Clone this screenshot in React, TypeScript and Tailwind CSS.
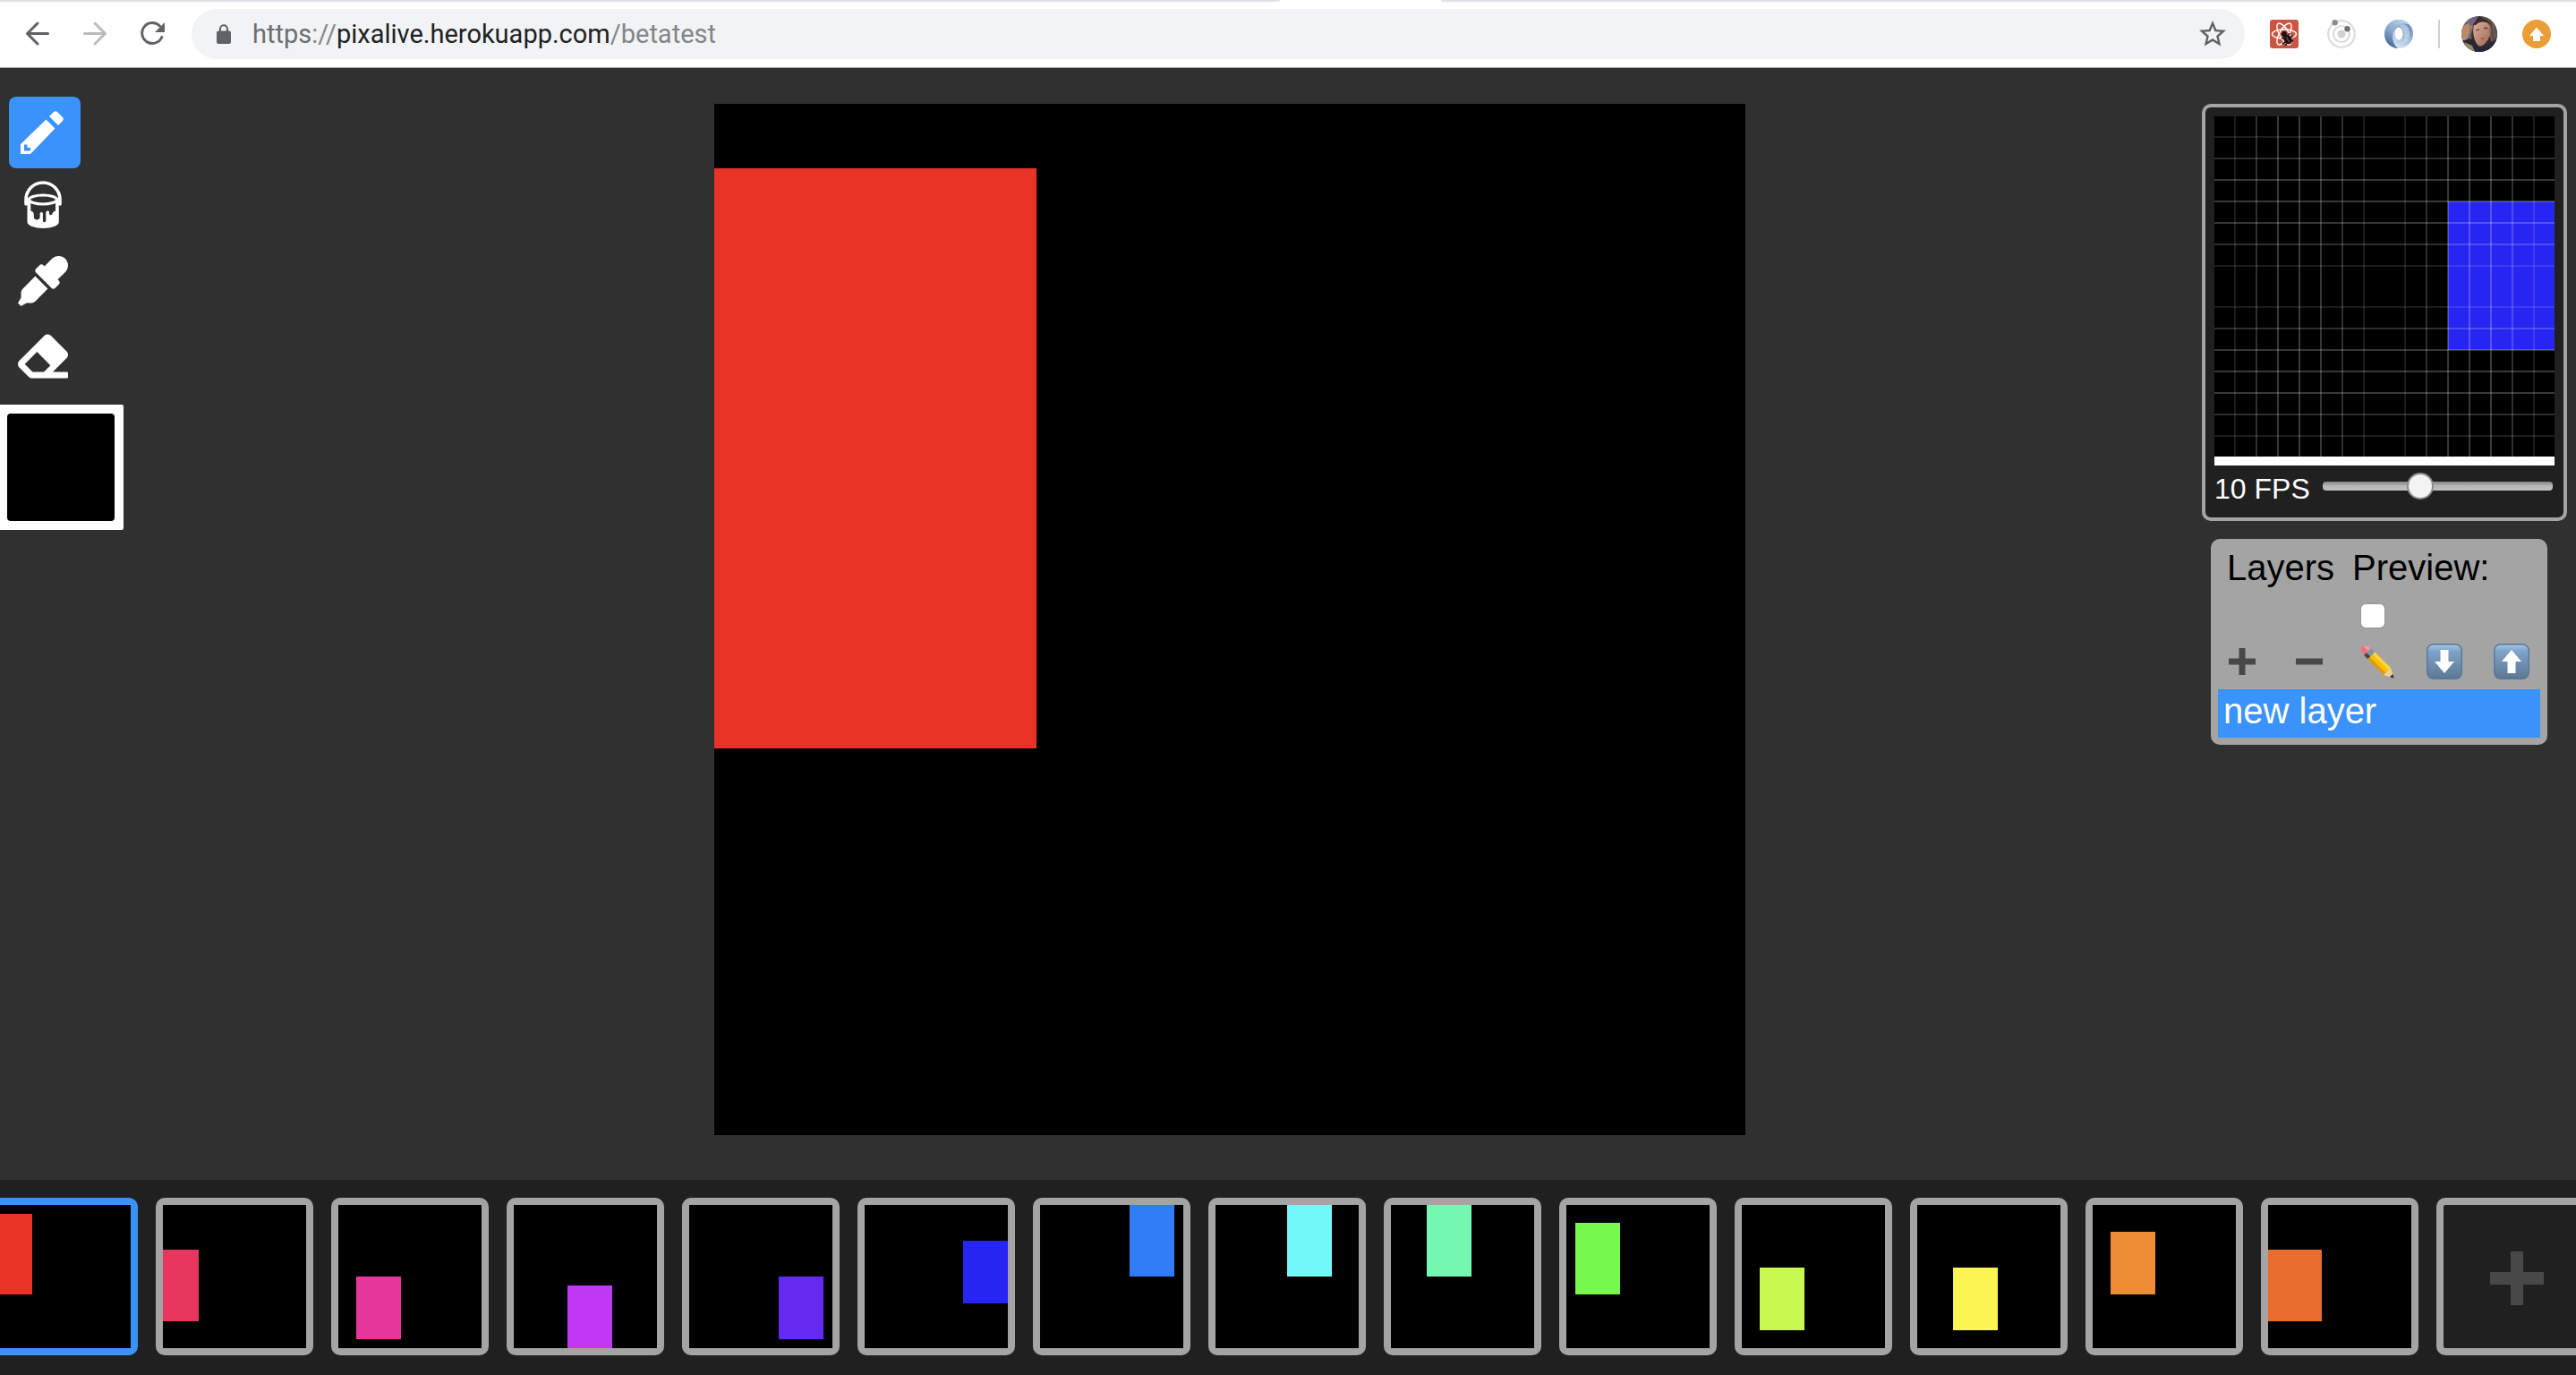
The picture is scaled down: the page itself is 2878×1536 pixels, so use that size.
import type { ReactNode } from "react";
import { useState } from "react";
import { FaEraser, FaEyeDropper } from "react-icons/fa";
import { MdStarBorder } from "react-icons/md";

type Block = { x: number; y: number; w: number; h: number; fill: string };

const FRAMES: Block[] = [
  { x: 0, y: 1, w: 5, h: 9, fill: "#e93326" },
  { x: 0, y: 5, w: 4, h: 8, fill: "#e8365e" },
  { x: 2, y: 8, w: 5, h: 7, fill: "#e8379b" },
  { x: 6, y: 9, w: 5, h: 7, fill: "#bf38f2" },
  { x: 10, y: 8, w: 5, h: 7, fill: "#652af1" },
  { x: 11, y: 4, w: 5, h: 7, fill: "#2625f1" },
  { x: 10, y: 0, w: 5, h: 8, fill: "#2f7cf4" },
  { x: 8, y: 0, w: 5, h: 8, fill: "#72f7fb" },
  { x: 4, y: 0, w: 5, h: 8, fill: "#74f7b1" },
  { x: 1, y: 2, w: 5, h: 8, fill: "#76f84e" },
  { x: 2, y: 7, w: 5, h: 7, fill: "#c9f950" },
  { x: 4, y: 7, w: 5, h: 7, fill: "#fbf553" },
  { x: 2, y: 3, w: 5, h: 7, fill: "#ed8e37" },
  { x: 0, y: 5, w: 6, h: 8, fill: "#e96d2d" },
];

const GRID_LINES = [
  [23, 0.11], [47, 0.18], [71, 0.22], [95, 0.22], [119, 0.21], [143, 0.18], [167, 0.11],
  [213, 0.11], [237, 0.18], [261, 0.21], [285, 0.22], [309, 0.22], [333, 0.18], [357, 0.11],
];

function PixelArt({ block, label }: { block: Block; label: string }) {
  return (
    <svg viewBox="0 0 16 16" className="block h-full w-full bg-black" role="img" aria-label={label}>
      <rect x={block.x} y={block.y} width={block.w} height={block.h} fill={block.fill} />
    </svg>
  );
}

function NavButton({ label, className, children }: { label: string; className: string; children: ReactNode }) {
  return (
    <button type="button" aria-label={label} className={`flex size-10 shrink-0 items-center justify-center ${className}`}>
      <svg viewBox="0 0 40 40" className="size-10" fill="none" stroke="currentColor" strokeWidth="3" strokeLinecap="round" strokeLinejoin="round">
        {children}
      </svg>
    </button>
  );
}

function ReactBugIcon() {
  return (
    <svg viewBox="0 0 32 32" className="size-8">
      <rect width="32" height="32" rx="3" fill="#cb5443" />
      <g fill="none" stroke="#fff" strokeWidth="1.4">
        <ellipse cx="16" cy="16" rx="13.5" ry="5.2" />
        <ellipse cx="16" cy="16" rx="13.5" ry="5.2" transform="rotate(60 16 16)" />
        <ellipse cx="16" cy="16" rx="13.5" ry="5.2" transform="rotate(120 16 16)" />
      </g>
      <g fill="#1b1311" stroke="#1b1311">
        <circle cx="16" cy="16" r="2.6" />
        <ellipse cx="20" cy="22" rx="3.8" ry="5.2" transform="rotate(-35 20 22)" />
        <path d="M13 21l5-1M14 27l5-3M26 18l-4 2M26 24l-4-2M17 29l3-4M22 15l-2 4" strokeWidth="1.5" fill="none" />
      </g>
      <path d="M18.5 19.5l3.5 6" stroke="#cb5443" strokeWidth="1" />
    </svg>
  );
}

function OrbitIcon() {
  return (
    <svg viewBox="0 0 32 32" className="size-8" fill="none">
      <circle cx="16" cy="16" r="14.8" stroke="#dcdcdc" strokeWidth="2.2" />
      <circle cx="16" cy="16" r="9" stroke="#dcdcdc" strokeWidth="2.2" />
      <circle cx="16" cy="16" r="4.6" fill="#d2d2d2" />
      <circle cx="8.6" cy="3.2" r="3.2" fill="#8b8b8b" />
      <circle cx="22.5" cy="10.2" r="3.2" fill="#717171" />
    </svg>
  );
}

function SwirlIcon() {
  return (
    <svg viewBox="0 0 32 32" className="size-8">
      <defs>
        <linearGradient id="swirlA" x1="0" y1="1" x2="0.6" y2="0">
          <stop offset="0" stopColor="#2e5288" />
          <stop offset="0.5" stopColor="#7f9fc6" />
          <stop offset="1" stopColor="#b9cfe5" />
        </linearGradient>
        <linearGradient id="swirlB" x1="0.8" y1="0" x2="0.2" y2="1">
          <stop offset="0" stopColor="#5878a8" />
          <stop offset="0.5" stopColor="#a3bddb" />
          <stop offset="1" stopColor="#e6f1fa" />
        </linearGradient>
      </defs>
      <circle cx="16" cy="16" r="16" fill="url(#swirlB)" />
      <path d="M13 32C5 30 0 24 0 16 0 7 7 0 16 0c6 0 10 2 13 7-4-3-8-3-12-1-5 2-8 6-8 12 0 6 2 11 6 14z" fill="url(#swirlA)" />
      <path d="M20 5c5 0 8 4 8 10 0 7-4 12-10 13 4-3 5-8 4-13-1-4-3-7-6-8z" fill="#c5d7ea" opacity="0.7" />
      <ellipse cx="16" cy="15.500" rx="4.5" ry="7" fill="#fff" />
    </svg>
  );
}

function Avatar() {
  return (
    <svg viewBox="0 0 40 40" className="size-10">
      <defs>
        <clipPath id="avatarClip">
          <circle cx="20" cy="20" r="20" />
        </clipPath>
        <linearGradient id="avatarSkin" x1="0" y1="0" x2="1" y2="1">
          <stop offset="0" stopColor="#dfb49f" />
          <stop offset="1" stopColor="#9c6552" />
        </linearGradient>
      </defs>
      <g clipPath="url(#avatarClip)">
        <rect width="40" height="40" fill="#3a2b2c" />
        <path d="M0 0h19l-5 9-4 16-10 3z" fill="#6f6780" />
        <path d="M0 12l8-4 4 4-6 14-6 2z" fill="#bd8a68" />
        <path d="M22 0h18v30l-7-2-3-15z" fill="#5d4d4a" />
        <path d="M15 8c5-6 14-3 17 4 2 7-1 14-6 19-4 4-8 3-10-2-3-6-4-15-1-21z" fill="url(#avatarSkin)" />
        <path d="M13 10C16 2 27 0 33 9c-6-3-13-4-17 1z" fill="#3c2a2b" />
        <path d="M16.500 16q2-1.500 3.500-.5M25 14q2.500-1.500 4.500 0" stroke="#5e3b34" strokeWidth="1.300" fill="none" />
        <path d="M21 25q2.500-1.500 5-.5-2 3-5 .5z" fill="#a25752" />
        <path d="M0 28l12-3 8 10 8-2 12-8v15H0z" fill="#26283a" />
        <path d="M3 29l9 4 3 7H8z" fill="#9a8a62" />
        <path d="M31 14l3 14M35 8l3 16M9 9l2 17" stroke="#806757" strokeWidth="1" fill="none" />
      </g>
    </svg>
  );
}

function UpdateIcon() {
  return (
    <svg viewBox="0 0 32 32" className="size-8">
      <circle cx="16" cy="16" r="16" fill="#e99e38" />
      <path d="M16 8.500l8 9.500h-4v6h-8v-6H8z" fill="#fff" />
    </svg>
  );
}

function BrowserBar() {
  return (
    <header className="border-b border-[#a9ada9] bg-white">
      <div className="flex h-0.5 justify-between">
        <div className="w-[49.700%] rounded-br-full bg-[#dee1e6]" />
        <div className="w-[44.050%] rounded-bl-full bg-[#dee1e6]" />
      </div>
      <div className="flex h-[73px] items-center gap-6 pr-7 pb-px pl-[22px]">
        <NavButton label="Back" className="text-[#5f6368]">
          <path d="M31.500 19.500H9M20 8L8.500 19.500 20 31" />
        </NavButton>
        <NavButton label="Forward" className="text-[#babcbe]">
          <path d="M8.500 19.500H31M20 8l11.500 11.500L20 31" />
        </NavButton>
        <NavButton label="Reload" className="text-[#5f6368]">
          <path d="M28.500 11A11.500 11.500 0 1 0 30.800 23.500" />
          <path d="M34 7v11H23z" fill="currentColor" stroke="none" />
        </NavButton>
        <div className="flex h-14 flex-1 items-center rounded-full bg-[#f1f3f4] pr-[18px] pl-7">
          <svg viewBox="0 0 16 22" className="h-[22px] w-4" fill="#5f6368">
            <rect y="7.500" width="16" height="14.500" rx="2" />
            <path d="M4 9V5.200a4 4 0 0 1 8 0V9" fill="none" stroke="#5f6368" strokeWidth="2" />
          </svg>
          <div role="textbox" aria-label="Address" tabIndex={0} className="flex-1 pl-6 font-[Roboto,sans-serif] text-[29px] leading-8 text-[#80868b]">
            <span className="text-[#6a6e73]">https</span>://<span className="text-[#202124]">pixalive.herokuapp.com</span>/betatest
          </div>
          <button type="button" aria-label="Bookmark this page" className="text-[#5f6368]">
            <MdStarBorder size={36} />
          </button>
        </div>
        <div className="flex items-center gap-7">
          <div className="flex gap-8 pl-1">
            <button type="button" aria-label="React debugger"><ReactBugIcon /></button>
            <button type="button" aria-label="Orbit"><OrbitIcon /></button>
            <button type="button" aria-label="Swirl"><SwirlIcon /></button>
          </div>
          <div className="h-8 w-0.5 bg-[#cfcfcf]" />
          <div className="-ml-1 flex items-center gap-7">
            <button type="button" aria-label="Profile"><Avatar /></button>
            <button type="button" aria-label="Update"><UpdateIcon /></button>
          </div>
        </div>
      </div>
    </header>
  );
}

function PencilIcon() {
  return (
    <svg viewBox="0 0 48 48" className="size-12" fill="currentColor">
      <path fillRule="evenodd" d="M0 37L28.500 9.500 38.500 19.500 11 48H0zM4 37.500V44.500H11V41H7.500V37.500z" />
      <path d="M32 6l4.500-4.500q2.500-2.500 5 0l5 5q2.500 2.500 0 5L42 16z" />
    </svg>
  );
}

function BucketIcon() {
  return (
    <svg viewBox="0 0 42 53" className="h-[53px] w-[42px]" fill="none" stroke="currentColor">
      <path d="M2 26v-5a19 19 0 0 1 38 0v5" strokeWidth="3.600" strokeLinecap="round" />
      <ellipse cx="21" cy="21" rx="15.500" ry="5" strokeWidth="3.200" />
      <path d="M3.500 19v8M38.500 19v8" strokeWidth="4" />
      <path
        d="M3.500 24h3.800v9.500q3 .5 3.500 3.500v3a3.400 3.400 0 0 0 6.800 0v-4q1.500-2 3.300 0v8.500a1.700 1.700 0 0 0 3.400 0V35q2-2.500 3.600-.5v2a1.800 1.800 0 0 0 3.600 0q.5-2 3.500-3V24h3.800v22c0 4-8 7-17.500 7S3.500 50 3.500 46z"
        fill="currentColor"
        stroke="none"
      />
    </svg>
  );
}

const TOOLS = [
  { name: "Pencil", icon: <PencilIcon />, style: "bg-[#3a92fb] pl-[13px]" },
  { name: "Fill", icon: <BucketIcon />, style: "pb-2 pl-[17px]" },
  { name: "Eyedropper", icon: <FaEyeDropper size={56} />, style: "pb-1 pl-2.5" },
  { name: "Eraser", icon: <FaEraser size={56} />, style: "pb-1 pl-2.5" },
];

function Tools() {
  return (
    <aside className="w-72 shrink-0 pt-8">
      <div className="flex flex-col gap-1 pl-2.5 text-white">
        {TOOLS.map((tool) => (
          <button key={tool.name} type="button" aria-label={tool.name} className={`flex size-20 items-center rounded-lg ${tool.style}`}>
            {tool.icon}
          </button>
        ))}
      </div>
      <button type="button" aria-label="Current colour" className="mt-3 block h-[140px] w-[138px] rounded-r-xs bg-white py-2.5 pr-2.5 pl-2">
        <span className="block h-full rounded bg-black" />
      </button>
    </aside>
  );
}

function Preview() {
  const [fps, setFps] = useState(10);
  return (
    <section className="rounded-[10px] border-4 border-[#a4a4a4] bg-[#202020] px-2.5 pt-2.5 pb-3">
      <svg viewBox="0 0 380 380" className="box-content block w-full border-b-10 border-white bg-black" role="img" aria-label="Animation preview">
        <rect x="261" y="95" width="119" height="166" fill="#2625f1" />
        {GRID_LINES.map(([p, a]) => (
          <g key={p} fill="#fff" fillOpacity={a}>
            <rect x={p - 1} y="0" width="2" height="380" />
            <rect x="0" y={p - 1} width="380" height="2" />
          </g>
        ))}
      </svg>
      <label className="flex items-center gap-3.5 pt-1.5 text-[32px] leading-10 text-white">
        <span className="whitespace-nowrap">{fps} FPS</span>
        <input
          type="range"
          min={0}
          max={24}
          value={fps}
          onChange={(e) => setFps(Number(e.target.value))}
          className="mr-0.5 mb-1.5 h-[30px] min-w-0 flex-1 appearance-none bg-transparent [&::-webkit-slider-runnable-track]:h-2.5 [&::-webkit-slider-runnable-track]:rounded-sm [&::-webkit-slider-runnable-track]:bg-linear-to-b [&::-webkit-slider-runnable-track]:from-[#858585] [&::-webkit-slider-runnable-track]:via-[#b8b8b8] [&::-webkit-slider-runnable-track]:to-[#c0c0c0] [&::-webkit-slider-thumb]:-mt-2.5 [&::-webkit-slider-thumb]:size-[30px] [&::-webkit-slider-thumb]:appearance-none [&::-webkit-slider-thumb]:rounded-full [&::-webkit-slider-thumb]:border-2 [&::-webkit-slider-thumb]:border-[#8c8c8c] [&::-webkit-slider-thumb]:bg-[#f3f3f3]"
        />
      </label>
    </section>
  );
}

function PencilEmoji() {
  return (
    <svg viewBox="0 0 40 40" className="size-10">
      <g transform="translate(2 2) rotate(45)">
        <path d="M5-5h5V5H5Q1 4 1 0t4-5z" fill="#e8727c" transform="translate(1 0)" />
        <path d="M6-5h4v4H3q0-3 3-4z" fill="#f59aa2" />
        <rect x="10" y="-5.500" width="6" height="11" fill="#7d96ad" />
        <rect x="10" y="1.500" width="6" height="4" fill="#3e4650" />
        <rect x="16" y="-5.500" width="25" height="11" fill="#f9bd0c" />
        <rect x="16" y="-5.500" width="25" height="3.500" fill="#ffd43c" />
        <rect x="16" y="2.500" width="25" height="3" fill="#dc9a00" />
        <path d="M41-5.500L52 0 41 5.500z" fill="#f3cf98" />
        <path d="M47.500-2.300L52 0l-4.500 2.300z" fill="#2b2b2b" />
      </g>
    </svg>
  );
}

function ArrowEmoji({ up = false }: { up?: boolean }) {
  return (
    <svg viewBox="0 0 40 40" className="size-10">
      <defs>
        <linearGradient id={up ? "arrowTileUp" : "arrowTileDown"} x1="0" y1="0" x2="0" y2="1">
          <stop offset="0" stopColor="#a9c8e4" />
          <stop offset="0.200" stopColor="#7fa3c8" />
          <stop offset="1" stopColor="#5c7792" />
        </linearGradient>
      </defs>
      <rect x="0.700" y="0.700" width="38.600" height="38.600" rx="7" fill={`url(#${up ? "arrowTileUp" : "arrowTileDown"})`} stroke="#54799c" strokeWidth="1.400" />
      <path d="M15.500 7h9v13H31L20 33 9 20h6.500z" fill="#fff" transform={up ? "rotate(180 20 20)" : undefined} />
    </svg>
  );
}

function Layers() {
  return (
    <section className="mr-[22px] ml-2.5 rounded-[10px] bg-[#a4a4a4] p-2 text-[40px] text-black">
      <div className="flex gap-5 pl-2.5">
        <h2 className="leading-[48px]">Layers</h2>
        <label className="leading-[48px]">
          Preview:
          <input type="checkbox" className="mt-[17px] ml-2.5 block size-[26px] appearance-none rounded-[5px] bg-white shadow-[0_0_2px_#777] checked:bg-[#3a92fb]" />
        </label>
      </div>
      <div className="mt-[18px] mb-[11px] flex justify-between pr-3 pl-[7px] text-[#484848]">
        <button type="button" aria-label="Add layer" className="flex size-10 items-center justify-center">
          <svg viewBox="0 0 30 30" className="size-[30px]" fill="currentColor"><path d="M11.500 0h7v11.500H30v7H18.500V30h-7V18.500H0v-7h11.500z" /></svg>
        </button>
        <button type="button" aria-label="Remove layer" className="flex size-10 items-center justify-center">
          <svg viewBox="0 0 30 30" className="size-[30px]" fill="currentColor"><rect y="11.500" width="30" height="7" /></svg>
        </button>
        <button type="button" aria-label="Rename layer"><PencilEmoji /></button>
        <button type="button" aria-label="Move layer down"><ArrowEmoji /></button>
        <button type="button" aria-label="Move layer up"><ArrowEmoji up /></button>
      </div>
      <ul>
        <li>
          <button type="button" className="block w-full bg-[#3a92fb] pb-1.5 pl-1.5 text-left leading-[48px] text-white">new layer</button>
        </li>
      </ul>
    </section>
  );
}

function Timeline() {
  return (
    <footer className="flex gap-5 overflow-hidden bg-[#202020] pt-5 pb-[22px]">
      {FRAMES.map((block, i) => (
        <button
          key={i}
          type="button"
          aria-label={`Select frame ${i + 1}`}
          className={`size-44 shrink-0 rounded-[10px] border-8 ${i === 0 ? "-ml-[22px] border-[#3a92fb]" : "border-[#a4a4a4]"}`}
        >
          <PixelArt block={block} label={`Frame ${i + 1}`} />
        </button>
      ))}
      <button type="button" aria-label="Add frame" className="flex size-44 shrink-0 items-center justify-center rounded-[10px] border-8 border-[#a4a4a4] pt-1 pl-1 text-[#484848]">
        <svg viewBox="0 0 60 60" className="size-[60px]" fill="currentColor"><path d="M23 0h14v23h23v14H37v23H23V37H0V23h23z" /></svg>
      </button>
    </footer>
  );
}

export default function App() {
  return (
    <div className="flex min-h-screen flex-col bg-[#303030] font-['Liberation_Sans',Arial,sans-serif]">
      <BrowserBar />
      <div className="flex flex-1">
        <Tools />
        <main className="flex flex-1 justify-center pt-10 pb-[50px]">
          <div className="aspect-square w-full max-w-6xl self-start">
            <PixelArt block={FRAMES[0]} label="Drawing canvas" />
          </div>
        </main>
        <aside className="flex w-[418px] shrink-0 flex-col gap-5 pt-10 pr-2.5">
          <Preview />
          <Layers />
        </aside>
      </div>
      <Timeline />
    </div>
  );
}
